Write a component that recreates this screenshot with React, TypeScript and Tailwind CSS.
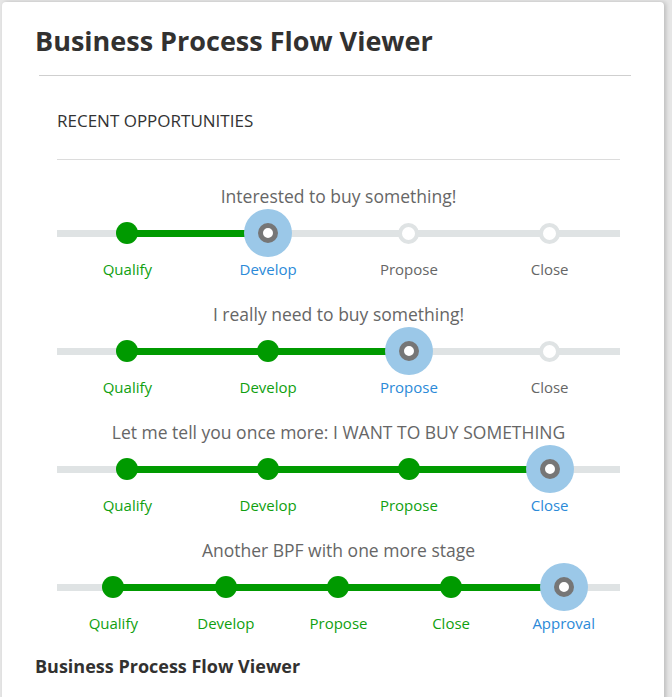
const flows = [
  { title: "Interested to buy something!", stages: ["Qualify", "Develop", "Propose", "Close"], active: 1 },
  { title: "I really need to buy something!", stages: ["Qualify", "Develop", "Propose", "Close"], active: 2 },
  { title: "Let me tell you once more: I WANT TO BUY SOMETHING", stages: ["Qualify", "Develop", "Propose", "Close"], active: 3 },
  { title: "Another BPF with one more stage", stages: ["Qualify", "Develop", "Propose", "Close", "Approval"], active: 4 },
];

function Stage({ label, index, active }: { label: string; index: number; active: number }) {
  const done = index < active;
  const current = index === active;
  const leftGreen = index > 0 && index <= active;
  const rightGreen = index < active;
  return (
    <div className="flex flex-col items-center">
      <div className="relative w-full h-12 flex items-center">
        <div className={`h-[7px] flex-1 ${leftGreen ? "bg-[#009a00]" : "bg-[#dfe3e4]"}`} />
        <div className={`h-[7px] flex-1 ${rightGreen ? "bg-[#009a00]" : "bg-[#dfe3e4]"}`} />
        <div className="absolute inset-0 flex items-center justify-center">
          {done && <div className="w-[22px] h-[22px] rounded-full bg-[#009a00]" />}
          {current && (
            <div className="w-12 h-12 rounded-full bg-[#9bc8e8] flex items-center justify-center">
              <div className="w-5 h-5 rounded-full border-[5px] border-[#767676] bg-white" />
            </div>
          )}
          {!done && !current && (
            <div className="w-[21px] h-[21px] rounded-full border-4 border-[#dfe3e4] bg-white" />
          )}
        </div>
      </div>
      <div
        className={`mt-0.5 text-[15px] leading-5 ${
          done ? "text-[#10a010]" : current ? "text-[#2b8ad8]" : "text-[#666666]"
        }`}
      >
        {label}
      </div>
    </div>
  );
}

export default function App() {
  return (
    <div className="min-h-screen bg-[#e6e6e6] p-[2px] font-['Open_Sans',sans-serif]">
      <div className="w-[662px] min-h-[720px] bg-white rounded-[4px] shadow-[2px_0_4px_rgba(0,0,0,0.18)] pt-[21px]">
        <h1 className="ml-[33px] text-[27px] leading-9 font-bold text-[#323130]">
          Business Process Flow Viewer
        </h1>
        <div className="ml-[37px] mr-[33px] mt-[16px] border-t border-[#cfcfcf]" />

        <div className="ml-[55px] mr-[44px]">
          <div className="mt-[35px] text-[17px] leading-5 text-[#333333]">RECENT OPPORTUNITIES</div>
          <div className="mt-[28px] border-t border-[#dcdcdc]" />

          <div className="mt-[24px] flex flex-col gap-[23px]">
            {flows.map((f) => (
              <div key={f.title} className="flex flex-col">
                <div className="text-center text-[17.5px] leading-6 text-[#666666]">{f.title}</div>
                <div
                  className={`mt-px grid ${f.stages.length === 5 ? "grid-cols-5" : "grid-cols-4"}`}
                >
                  {f.stages.map((s, i) => (
                    <Stage key={s} label={s} index={i} active={f.active} />
                  ))}
                </div>
              </div>
            ))}
          </div>
        </div>

        <div className="ml-[33px] mt-[21px] text-[18px] leading-6 font-bold text-[#323130]">
          Business Process Flow Viewer
        </div>
      </div>
    </div>
  );
}
